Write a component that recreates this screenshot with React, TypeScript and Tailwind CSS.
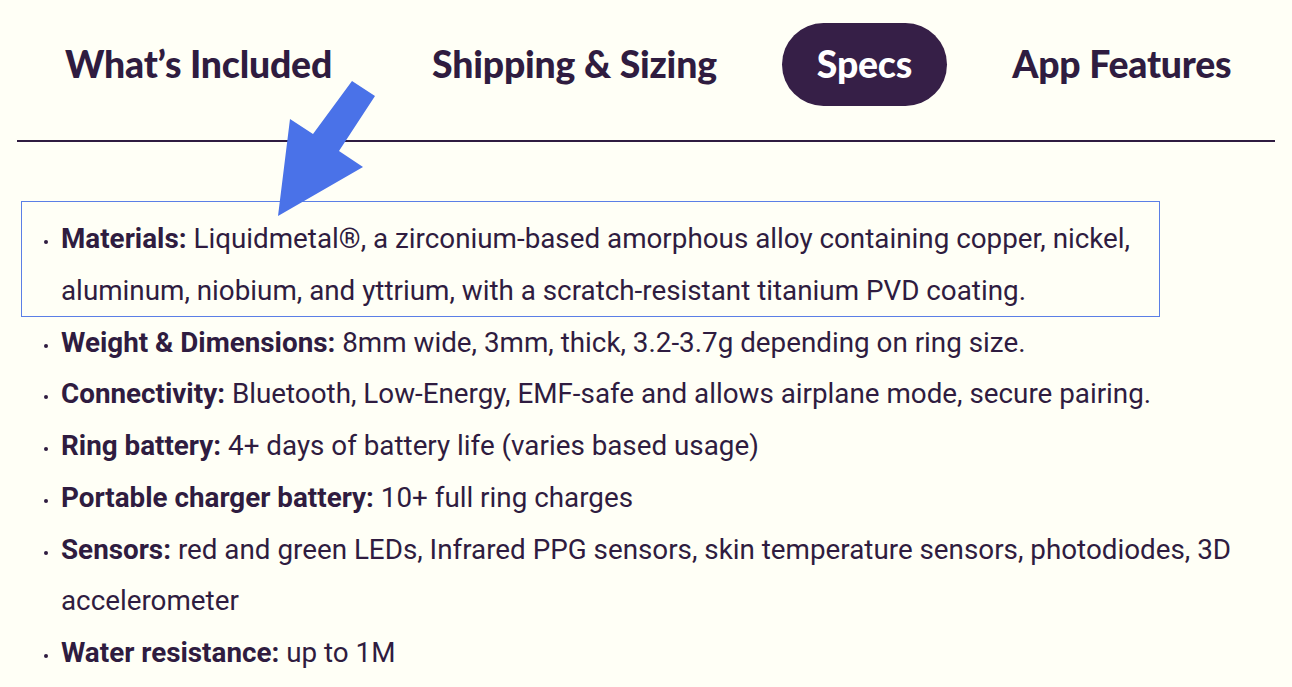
import React from 'react';

const tabs = ["What’s Included", 'Shipping & Sizing', 'Specs', 'App Features'];

const specs: { label: string; text: string }[] = [
  {
    label: 'Materials:',
    text: 'Liquidmetal®, a zirconium-based amorphous alloy containing copper, nickel, aluminum, niobium, and yttrium, with a scratch-resistant titanium PVD coating.',
  },
  { label: 'Weight & Dimensions:', text: '8mm wide, 3mm, thick, 3.2-3.7g depending on ring size.' },
  { label: 'Connectivity:', text: 'Bluetooth, Low-Energy, EMF-safe and allows airplane mode, secure pairing.' },
  { label: 'Ring battery:', text: '4+ days of battery life (varies based usage)' },
  { label: 'Portable charger battery:', text: '10+ full ring charges' },
  {
    label: 'Sensors:',
    text: 'red and green LEDs, Infrared PPG sensors, skin temperature sensors, photodiodes, 3D accelerometer',
  },
  { label: 'Water resistance:', text: 'up to 1M' },
];

// callout arrow pointing at the first spec
const Arrow: React.FC = () => (
  <svg className="absolute left-0 top-0 pointer-events-none" width="1292" height="687" viewBox="0 0 1292 687">
    <polygon points="352,81 375,96 339,151 363,167 278,216 290,119 313,134" fill="#4a72e8" />
  </svg>
);

export default function App() {
  return (
    <div className="relative w-[1292px] h-[687px] overflow-hidden bg-[#fffff6] text-[#2f1c40]">
      <nav className="flex items-start gap-[30px] pl-[30px] pt-[23px] h-[140px]">
        {tabs.map((t) => (
          <div
            key={t}
            className={`h-[83px] px-[35px] flex items-center rounded-full text-[37.4px] font-black tracking-[-0.2px] ${
              t === 'Specs' ? 'bg-[#361f47] text-white' : ''
            }`}
            style={{ fontFamily: 'Lato, "Open Sans", sans-serif' }}
          >
            {t}
          </div>
        ))}
      </nav>
      <div className="mx-[17px] h-[2px] bg-[#2f1c40]" />

      <ul
        className="pl-[61px] pr-[40px] pt-[71px] text-[27.8px] leading-[51.75px]"
        style={{ fontFamily: 'Roboto, "Noto Sans", sans-serif' }}
      >
        {specs.map((s, i) => (
          <li key={s.label} className="relative">
            <span className="absolute -left-[17px] top-[27px] w-[4px] h-[4px] rounded-full bg-[#2f1c40]" />
            <b className="font-bold">{s.label}</b> {s.text}
            {i === 0 && (
              <div className="absolute -left-[40px] -top-[12px] w-[1139px] h-[116px] border-[1.5px] border-[#5b7fe6]" />
            )}
          </li>
        ))}
      </ul>
      <Arrow />
    </div>
  );
}
